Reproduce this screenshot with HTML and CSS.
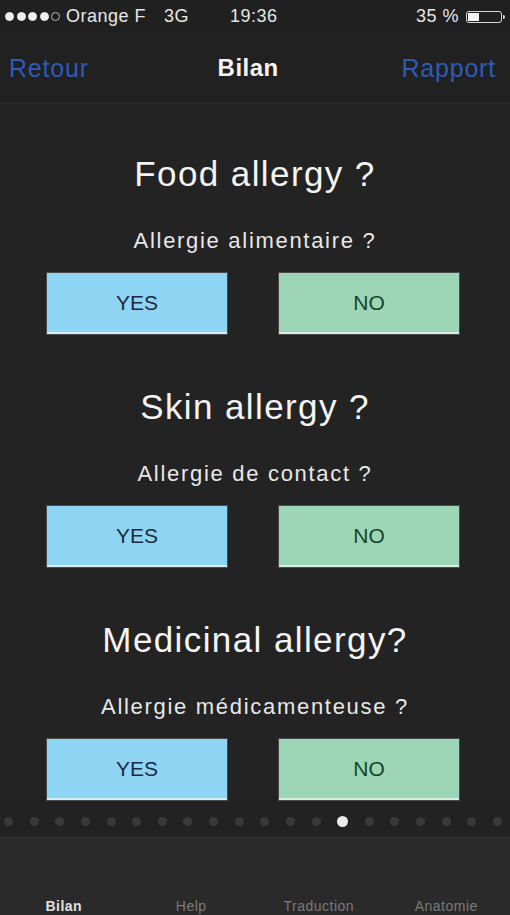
FILE: index.html
```html
<!DOCTYPE html>
<html lang="fr">

<head>
    <meta charset="UTF-8">
    <meta name="viewport" content="width=device-width, initial-scale=1.0">
    <title>Bilan</title>
    <link rel="stylesheet" href="styles.css">
</head>

<body>

    <div id="phone">
        <!-- Status bar -->
        <div class="status-bar">
            <div class="status-left">
                <span class="signal">
                    <i class="on"></i><i class="on"></i><i class="on"></i><i class="on"></i><i></i>
                </span>
                <span class="carrier">Orange F</span>
                <span class="network">3G</span>
            </div>
            <div class="status-time">19:36</div>
            <div class="status-right">
                <span>35 %</span>
                <span class="battery"><span class="level"></span></span>
            </div>
        </div>

        <!-- Navigation -->
        <div class="nav-bar">
            <a class="nav-link" href="#">Retour</a>
            <div class="nav-title">Bilan</div>
            <a class="nav-link" href="#">Rapport</a>
        </div>

        <div class="content">
            <div class="question">
                <h2>Food allergy ?</h2>
                <p>Allergie alimentaire ?</p>
                <div class="answers">
                    <button class="btn yes">YES</button>
                    <button class="btn no">NO</button>
                </div>
            </div>

            <div class="question">
                <h2>Skin allergy ?</h2>
                <p>Allergie de contact ?</p>
                <div class="answers">
                    <button class="btn yes">YES</button>
                    <button class="btn no">NO</button>
                </div>
            </div>

            <div class="question">
                <h2>Medicinal allergy?</h2>
                <p>Allergie médicamenteuse ?</p>
                <div class="answers">
                    <button class="btn yes">YES</button>
                    <button class="btn no">NO</button>
                </div>
            </div>
        </div>

        <!-- Page dots -->
        <div class="pager">
            <span></span><span></span><span></span><span></span><span></span>
            <span></span><span></span><span></span><span></span><span></span>
            <span></span><span></span><span></span><span class="active"></span><span></span>
            <span></span><span></span><span></span><span></span><span></span>
        </div>

        <!-- Tab bar -->
        <div class="tab-bar">
            <div class="tab current">Bilan</div>
            <div class="tab">Help</div>
            <div class="tab">Traduction</div>
            <div class="tab">Anatomie</div>
        </div>
    </div>

</body>

</html>
```

FILE: styles.css
```css
body {
    margin: 0;
    background-color: #232323;
    font-family: 'Liberation Sans', Arial, sans-serif;
    color: #f2f2f2;
}

#phone {
    width: 510px;
    height: 915px;
    overflow: hidden;
    display: flex;
    flex-direction: column;
}

/* Status bar */
.status-bar {
    height: 34px;
    display: flex;
    align-items: center;
    padding: 0 8px 0 5px;
    font-size: 18px;
    letter-spacing: 0.5px;
    color: #e6e6e6;
    background-color: #202020;
}

.status-left {
    display: flex;
    align-items: center;
    width: 225px;
}

.signal {
    display: flex;
    gap: 2.5px;
    margin-right: 6px;
}

.signal i {
    width: 7px;
    height: 7px;
    border-radius: 50%;
    border: 1px solid #bbb;
}

.signal i.on {
    background-color: #eee;
    border-color: #eee;
}

.network {
    margin-left: 18px;
}

.status-time {
    flex: 1;
}

.status-right {
    display: flex;
    align-items: center;
    gap: 7px;
}

.battery {
    position: relative;
    width: 36px;
    height: 12px;
    border: 1px solid #d8d8d8;
    border-radius: 3px;
    padding: 1px;
    box-sizing: border-box;
}

.battery .level {
    display: block;
    width: 11px;
    height: 100%;
    background-color: #f2f2f2;
}

.battery::after {
    content: '';
    position: absolute;
    right: -4px;
    top: 3px;
    width: 2px;
    height: 4px;
    background-color: #d8d8d8;
    border-radius: 0 2px 2px 0;
}

/* Nav bar */
.nav-bar {
    height: 69px;
    display: flex;
    align-items: center;
    justify-content: space-between;
    padding: 0 14px 0 9px;
    border-bottom: 1px solid #2c2c2c;
    background-color: #212121;
}

.nav-link {
    color: #2d5cb8;
    font-size: 25px;
    letter-spacing: 0.8px;
    text-decoration: none;
}

.nav-title {
    font-size: 24px;
    font-weight: bold;
    letter-spacing: 0.5px;
    color: #f4f4f4;
    margin-left: 6px;
}

/* Questions */
.content {
    flex: 1;
    display: flex;
    flex-direction: column;
    gap: 52px;
    padding-top: 50px;
}

.question {
    display: flex;
    flex-direction: column;
    align-items: center;
}

.question h2 {
    margin: 0 0 33px;
    height: 40px;
    line-height: 40px;
    font-size: 35px;
    font-weight: normal;
    letter-spacing: 1.4px;
    color: #f4f4f4;
}

.question p {
    margin: 0 0 17px;
    height: 28px;
    line-height: 28px;
    font-size: 22px;
    letter-spacing: 1.7px;
    color: #e8e8e8;
}

.answers {
    display: flex;
    gap: 50px;
    margin-right: 4px;
}

.btn {
    width: 182px;
    height: 63px;
    border: 1px solid #4a4a4a;
    box-shadow: inset 0 -2px 0 rgba(255, 255, 255, 0.6);
    font-family: 'Liberation Sans', Arial, sans-serif;
    font-size: 21px;
    cursor: pointer;
}

.btn.yes {
    background-color: #8ed4f3;
    color: #1d2b3c;
}

.btn.no {
    background-color: #9cd6b6;
    color: #17442c;
}

/* Pager dots */
.pager {
    height: 37px;
    display: flex;
    align-items: center;
    justify-content: space-between;
    padding: 6px 8px 0 4px;
    box-sizing: border-box;
    background-color: #222;
}

.pager span {
    width: 9px;
    height: 9px;
    border-radius: 50%;
    background-color: #393939;
}

.pager span.active {
    width: 11px;
    height: 11px;
    background-color: #ececec;
}

/* Tab bar */
.tab-bar {
    height: 77px;
    display: flex;
    align-items: flex-end;
    background-color: #2a2a2a;
    border-top: 1px solid #303030;
}

.tab {
    flex: 1;
    text-align: center;
    font-size: 14px;
    line-height: 16px;
    letter-spacing: 0.5px;
    color: #7a7a7a;
    margin-bottom: 1px;
}

.tab.current {
    color: #e0e0e0;
    font-weight: bold;
}
```
